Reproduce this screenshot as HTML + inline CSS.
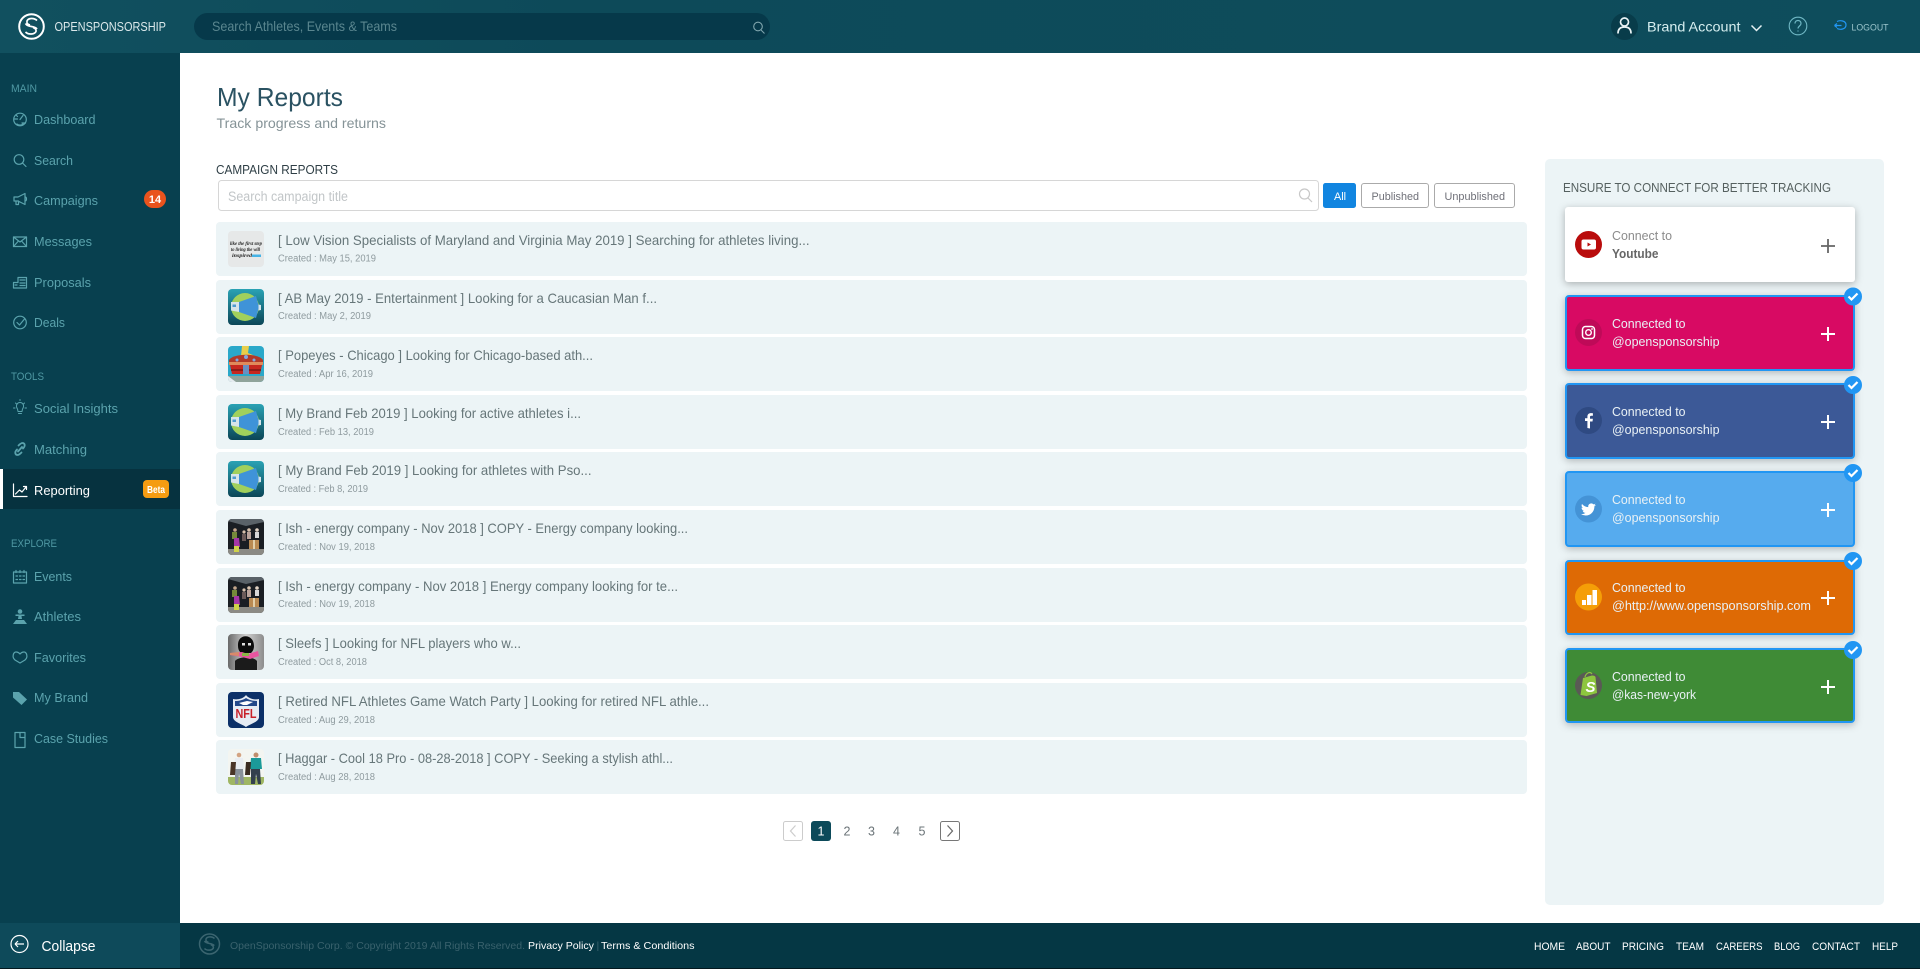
<!DOCTYPE html>
<html lang="en"><head><meta charset="utf-8"><title>My Reports</title>
<style>
html,body{margin:0;padding:0;background:#fff;width:1920px;height:969px;overflow:hidden}
svg{display:block;font-family:"Liberation Sans",sans-serif}
.s{fill:none;stroke:#5ba3ad;stroke-width:1.2;stroke-linecap:round;stroke-linejoin:round}
.n{fill:#5ba3ad;font-size:13px}
.l{fill:#4f98a3;font-size:11px}
.t{fill:#667679;font-size:14px}
.d{fill:#8f9b9f;font-size:10px}
.w{fill:#e9f1f5;font-size:12.5px}
.f{fill:#fff;font-size:11px}
.pg{fill:#6b7478;font-size:12.5px;text-anchor:middle}
.pl{stroke:#fff;stroke-width:2;fill:none}
</style></head><body>
<svg width="1920" height="969" viewBox="0 0 1920 969" xmlns="http://www.w3.org/2000/svg">
<defs>
<linearGradient id="hd" x1="0" x2="1" y1="0" y2="0"><stop offset="0" stop-color="#11505f"/><stop offset=".3" stop-color="#0d4a59"/><stop offset="1" stop-color="#0e4d5c"/></linearGradient>
<linearGradient id="fish" x1="0" x2="0" y1="0" y2="1"><stop offset="0" stop-color="#2aa2b4"/><stop offset="1" stop-color="#0c4657"/></linearGradient>
<linearGradient id="gr" x1="0" x2="1" y1="0" y2="0"><stop offset="0" stop-color="#6a6a6a"/><stop offset=".5" stop-color="#cfcfcf"/><stop offset="1" stop-color="#8d8d8d"/></linearGradient>
<clipPath id="rc"><rect width="36" height="36" rx="4"/></clipPath>
<symbol id="thFish" width="36" height="36" overflow="visible"><g clip-path="url(#rc)"><rect width="36" height="36" fill="url(#fish)"/><circle cx="17" cy="18" r="14" fill="#a1d05c"/><path d="M11 13 28 7 31 18 28 29 11 23z" fill="#3f93d8"/><path d="M3 13 11 13V23L3 21.500z" fill="#d6e4ea"/><rect x="4.500" y="15.500" width="3.500" height="2.500" fill="#4f9bd0"/><path d="M30.500 15.500 33 16v5l-2.500.5z" fill="#d6e4ea"/></g></symbol>
<symbol id="thIsh" width="36" height="36" overflow="visible"><g clip-path="url(#rc)"><rect width="36" height="36" fill="#1a1e23"/><path d="M0 0H36V3L18 7 0 2z" fill="#5a6268"/><rect y="30" width="36" height="6" fill="#8b8a84"/><circle cx="7" cy="11" r="1.800" fill="#c5a78c"/><rect x="4" y="13" width="5" height="7" fill="#758a3a"/><path d="M6 19h5l1 9H6z" fill="#a536a8"/><rect x="6" y="27" width="5" height="6" fill="#cfd24a"/><circle cx="16" cy="13" r="1.600" fill="#d8c2ad"/><rect x="14" y="15" width="4" height="7" fill="#6a5a58"/><circle cx="21" cy="11" r="1.800" fill="#d8c2ad"/><rect x="19" y="13" width="4" height="7" fill="#b9a39a"/><circle cx="29" cy="11" r="1.800" fill="#e2d3c4"/><rect x="27" y="13" width="4" height="6" fill="#d8d8d8"/><rect x="21" y="21" width="10" height="9" fill="#b98a52"/><rect x="25" y="21" width="2" height="9" fill="#e2cfa9"/></g></symbol>
</defs>

<!-- backgrounds -->
<rect width="1920" height="969" fill="#fff"/>
<rect width="180" height="923" fill="#08404f"/>
<rect width="1920" height="53" fill="url(#hd)"/>
<rect y="923" width="1920" height="45" fill="#053744"/>
<rect y="923" width="180" height="45" fill="#0e4a5a"/>
<rect y="968" width="1920" height="1" fill="#02181f"/>

<!-- header -->
<g fill="none" stroke="#fff">
<circle cx="31.500" cy="26.500" r="12.300" stroke-width="2"/>
<path d="M37 20.500c-3-3-9-2.500-10 .5-.5 2 1 3.500 3 4M25.500 23.500c2 4 9 2 11.500 5.500M25.500 32c3 3 9 2.500 10.500-.5.5-2-1-3.500-3-4" stroke-width="1.700"/>
</g>
<text x="54.500" y="31" fill="#dbe8eb" font-size="13" textLength="111.500" lengthAdjust="spacingAndGlyphs">OPENSPONSORSHIP</text>
<rect x="194" y="13" width="576" height="27" rx="13.500" fill="#06394a"/>
<text x="212" y="31" fill="#5a868f" font-size="14" textLength="185" lengthAdjust="spacingAndGlyphs">Search Athletes, Events &amp; Teams</text>
<circle cx="758" cy="26.500" r="4.300" fill="none" stroke="#7fa5ad" stroke-width="1.100"/><path d="M761 30l3.500 3.500" stroke="#7fa5ad" stroke-width="1.100"/>

<circle cx="1624.500" cy="26.500" r="13.500" fill="#083c4a"/>
<circle cx="1624.500" cy="22" r="4" fill="none" stroke="#e9f3f5" stroke-width="1.700"/>
<path d="M1618 33.500c0-4.500 2.500-6.500 6.500-6.500s6.500 2 6.500 6.500" fill="none" stroke="#e9f3f5" stroke-width="1.700"/>
<text x="1647" y="31.500" fill="#d6eef0" font-size="14" textLength="93.500" lengthAdjust="spacingAndGlyphs">Brand Account</text>
<path d="M1751.500 25.500l5 5 5-5" fill="none" stroke="#e6f1f3" stroke-width="1.500"/>
<circle cx="1798" cy="26" r="8.800" fill="none" stroke="#6fb7c4" stroke-width="1.100"/>
<path d="M1795 23.500c0-4 6-4 6 0 0 2.500-3 2.500-3 5M1798 30.500v1" fill="none" stroke="#6fb7c4" stroke-width="1.200"/>
<path d="M1837 21.500c3-1.500 9-1 9 3.500s-6 5-9 3.500M1834.500 25.500h7M1834.500 25.500l2.500-2M1834.500 25.500l2.500 2" fill="none" stroke="#2196f3" stroke-width="1.200"/>
<text x="1851.500" y="30.500" fill="#9cc6cd" font-size="9.500" textLength="37" lengthAdjust="spacingAndGlyphs">LOGOUT</text>

<!-- sidebar -->
<rect y="469" width="180" height="40" fill="#06323f"/><rect y="469" width="3" height="40" fill="#fff"/>
<text class="l" x="11" y="92" textLength="26" lengthAdjust="spacingAndGlyphs">MAIN</text>
<text class="n" x="34" y="124" textLength="61.500" lengthAdjust="spacingAndGlyphs">Dashboard</text>
<text class="n" x="34" y="165" textLength="39" lengthAdjust="spacingAndGlyphs">Search</text>
<text class="n" x="34" y="205" textLength="64" lengthAdjust="spacingAndGlyphs">Campaigns</text>
<text class="n" x="34" y="246" textLength="58" lengthAdjust="spacingAndGlyphs">Messages</text>
<text class="n" x="34" y="287" textLength="57" lengthAdjust="spacingAndGlyphs">Proposals</text>
<text class="n" x="34" y="327" textLength="31" lengthAdjust="spacingAndGlyphs">Deals</text>
<text class="l" x="11" y="380" textLength="33" lengthAdjust="spacingAndGlyphs">TOOLS</text>
<text class="n" x="34" y="413" textLength="84" lengthAdjust="spacingAndGlyphs">Social Insights</text>
<text class="n" x="34" y="454" textLength="53" lengthAdjust="spacingAndGlyphs">Matching</text>
<text x="34" y="495" fill="#fff" font-size="13" textLength="56" lengthAdjust="spacingAndGlyphs">Reporting</text>
<text class="l" x="11" y="547" textLength="46" lengthAdjust="spacingAndGlyphs">EXPLORE</text>
<text class="n" x="34" y="581" textLength="38" lengthAdjust="spacingAndGlyphs">Events</text>
<text class="n" x="34" y="621" textLength="47" lengthAdjust="spacingAndGlyphs">Athletes</text>
<text class="n" x="34" y="662" textLength="52" lengthAdjust="spacingAndGlyphs">Favorites</text>
<text class="n" x="34" y="702" textLength="54" lengthAdjust="spacingAndGlyphs">My Brand</text>
<text class="n" x="34" y="743" textLength="74" lengthAdjust="spacingAndGlyphs">Case Studies</text>

<rect x="144" y="190" width="22" height="18" rx="9" fill="#e9531d"/>
<text x="155" y="203" fill="#fff" font-size="11" font-weight="bold" text-anchor="middle">14</text>
<rect x="143" y="480" width="26" height="18" rx="4" fill="#f59c12"/>
<text x="156" y="493" fill="#fff" font-size="10" font-weight="bold" text-anchor="middle" textLength="18" lengthAdjust="spacingAndGlyphs">Beta</text>

<!-- sidebar icons -->
<g class="s">
<circle cx="20" cy="119.500" r="6.300"/><path d="M20 119.500l3-4M14.500 119h3M22 123h3.500M17 124c1 1.500 5 1.500 6 0M16 115l1.500 1.500"/>
<circle cx="19" cy="159.500" r="4.800"/><path d="M22.500 163l3.500 3.500"/>
<path d="M14 197h4l7-3.500v11L18 201h-4zM16 201v3.500h2.500V201M25 197c2 0 2 4 0 4"/>
<rect x="13.500" y="237" width="13" height="9.500"/><path d="M13.500 237l6.500 5 6.500-5M13.500 246.500l4.500-5M26.500 246.500l-4.500-5"/>
<path d="M18 277.500h8.500V288H13.500v-5.500H18zM20 280h5M20 283h5M20 285.500h5M15 285h2"/>
<circle cx="20" cy="322.500" r="6.300"/><path d="M17 322.500l2.500 2.500 5-6"/>
<path d="M17.500 409c-2.500-3.500 0-6.500 2.500-6.500s5 3 2.500 6.500l-.5 2.500h-4zM18.500 413.500h3M13.500 408h1.500M25 408h1.500M15.500 403l1 1M24.500 403l-1 1M20 400.500v-1" stroke-width="1"/>
<path d="M17 449.500c-3 3-1.500 5.500.5 5.500 1.500 0 2.500-1 4-2.500M23 448.500c3-3 1.500-5.500-.5-5.500-1.500 0-2.500 1-4 2.500M18 451.500l4-4.500" stroke-width="1.800"/>
<path d="M13.500 484v12.500h13.500" stroke="#fff"/><path d="M15.500 494l4-4 2.500 2 4-5M23.500 486.500h3v3" stroke="#fff"/>
<rect x="13.500" y="572" width="13" height="11"/><path d="M16 570.500v2M20 570.500v2M24 570.500v2M16 576h1.500M19.500 576h1.500M23 576h1.500M16 579.500h1.500M19.500 579.500h1.500M23 579.500h1.500"/>
<path d="M15 660c-3.500-3-1.500-8 1-8 1.500 0 3 .8 4 2 1-1.200 2.500-2 4-2 2.500 0 4.500 5 1 8l-5 3z"/>
<path d="M15 732.500h10v15H15zM20 732.500v5h5"/>
</g>
<g fill="#5ba3ad">
<circle cx="20" cy="611.500" r="2.300"/><path d="M15.500 614.500h9v1.500h-3l.5 3h-4l.5-3h-3z"/><path d="M13 624l3-4h8l3 4z"/>
<path d="M13 692h6l8 7.500-5.500 5.500-8.500-7.500z"/>
</g>

<!-- page heading -->
<text x="217" y="106" fill="#2a5262" font-size="26" textLength="126" lengthAdjust="spacingAndGlyphs">My Reports</text>
<text x="216.500" y="128" fill="#859397" font-size="14" textLength="169.500" lengthAdjust="spacingAndGlyphs">Track progress and returns</text>
<text x="216" y="174" fill="#2f3f46" font-size="12.500" textLength="122" lengthAdjust="spacingAndGlyphs">CAMPAIGN REPORTS</text>

<rect x="218.500" y="180.500" width="1100" height="30" rx="3" fill="#fff" stroke="#d6d6d6"/>
<text x="228" y="201" fill="#c2c6c8" font-size="13.500" textLength="120" lengthAdjust="spacingAndGlyphs">Search campaign title</text>
<circle cx="1304.500" cy="194" r="5" fill="none" stroke="#c8c8c8" stroke-width="1.200"/><path d="M1308 198l4 4" stroke="#c8c8c8" stroke-width="1.200"/>
<rect x="1323" y="183" width="33" height="25" rx="2.500" fill="#1185e0"/>
<text x="1334" y="200" fill="#fff" font-size="11" textLength="12" lengthAdjust="spacingAndGlyphs">All</text>
<rect x="1361.500" y="183.500" width="67" height="24" rx="2.500" fill="#fff" stroke="#aaa"/>
<text x="1371.500" y="200" fill="#6f7078" font-size="11" textLength="47.500" lengthAdjust="spacingAndGlyphs">Published</text>
<rect x="1434.500" y="183.500" width="80" height="24" rx="2.500" fill="#fff" stroke="#aaa"/>
<text x="1444.500" y="200" fill="#6f7078" font-size="11" textLength="60.500" lengthAdjust="spacingAndGlyphs">Unpublished</text>

<!-- rows -->
<g fill="#ecf4f6">
<rect x="216" y="222" width="1311" height="54" rx="4"/><rect x="216" y="280" width="1311" height="54" rx="4"/><rect x="216" y="337" width="1311" height="54" rx="4"/><rect x="216" y="395" width="1311" height="54" rx="4"/><rect x="216" y="452" width="1311" height="54" rx="4"/><rect x="216" y="510" width="1311" height="54" rx="4"/><rect x="216" y="568" width="1311" height="54" rx="4"/><rect x="216" y="625" width="1311" height="54" rx="4"/><rect x="216" y="683" width="1311" height="54" rx="4"/><rect x="216" y="740" width="1311" height="54" rx="4"/>
</g>
<text class="t" x="278" y="245" textLength="531.500" lengthAdjust="spacingAndGlyphs">[ Low Vision Specialists of Maryland and Virginia May 2019 ] Searching for athletes living...</text>
<text class="d" x="278" y="261.500" textLength="98" lengthAdjust="spacingAndGlyphs">Created : May 15, 2019</text>
<text class="t" x="278" y="303" textLength="379" lengthAdjust="spacingAndGlyphs">[ AB May 2019 - Entertainment ] Looking for a Caucasian Man f...</text>
<text class="d" x="278" y="319" textLength="93" lengthAdjust="spacingAndGlyphs">Created : May 2, 2019</text>
<text class="t" x="278" y="360" textLength="315" lengthAdjust="spacingAndGlyphs">[ Popeyes - Chicago ] Looking for Chicago-based ath...</text>
<text class="d" x="278" y="377" textLength="95" lengthAdjust="spacingAndGlyphs">Created : Apr 16, 2019</text>
<text class="t" x="278" y="418" textLength="303" lengthAdjust="spacingAndGlyphs">[ My Brand Feb 2019 ] Looking for active athletes i...</text>
<text class="d" x="278" y="435" textLength="96" lengthAdjust="spacingAndGlyphs">Created : Feb 13, 2019</text>
<text class="t" x="278" y="475" textLength="313.500" lengthAdjust="spacingAndGlyphs">[ My Brand Feb 2019 ] Looking for athletes with Pso...</text>
<text class="d" x="278" y="492" textLength="90" lengthAdjust="spacingAndGlyphs">Created : Feb 8, 2019</text>
<text class="t" x="278" y="533" textLength="410" lengthAdjust="spacingAndGlyphs">[ Ish - energy company - Nov 2018 ] COPY - Energy company looking...</text>
<text class="d" x="278" y="550" textLength="97" lengthAdjust="spacingAndGlyphs">Created : Nov 19, 2018</text>
<text class="t" x="278" y="591" textLength="400" lengthAdjust="spacingAndGlyphs">[ Ish - energy company - Nov 2018 ] Energy company looking for te...</text>
<text class="d" x="278" y="607" textLength="97" lengthAdjust="spacingAndGlyphs">Created : Nov 19, 2018</text>
<text class="t" x="278" y="648" textLength="243" lengthAdjust="spacingAndGlyphs">[ Sleefs ] Looking for NFL players who w...</text>
<text class="d" x="278" y="665" textLength="89" lengthAdjust="spacingAndGlyphs">Created : Oct 8, 2018</text>
<text class="t" x="278" y="706" textLength="431" lengthAdjust="spacingAndGlyphs">[ Retired NFL Athletes Game Watch Party ] Looking for retired NFL athle...</text>
<text class="d" x="278" y="723" textLength="97" lengthAdjust="spacingAndGlyphs">Created : Aug 29, 2018</text>
<text class="t" x="278" y="763" textLength="395" lengthAdjust="spacingAndGlyphs">[ Haggar - Cool 18 Pro - 08-28-2018 ] COPY - Seeking a stylish athl...</text>
<text class="d" x="278" y="780" textLength="97" lengthAdjust="spacingAndGlyphs">Created : Aug 28, 2018</text>

<!-- thumbnails -->
<g transform="translate(228,231)"><g clip-path="url(#rc)"><rect width="36" height="36" fill="#e6e8e8"/><g font-family="Liberation Serif,serif" font-style="italic" font-weight="bold" font-size="5.500" fill="#222"><text x="2" y="14" textLength="32" lengthAdjust="spacingAndGlyphs">like the first step</text><text x="3" y="20" textLength="29" lengthAdjust="spacingAndGlyphs">to living the will</text><text x="4" y="26" textLength="20" lengthAdjust="spacingAndGlyphs">inspired</text></g><rect x="24" y="23.500" width="9" height="2.500" fill="#45b3e6"/></g></g>
<use href="#thFish" x="228" y="289"/>
<g transform="translate(228,346)"><g clip-path="url(#rc)"><rect width="36" height="36" fill="#2aa8c9"/><path d="M14 0h7l-1 7 7 3H13z" fill="#e8cf4a"/><path d="M1 14C5 7 31 7 35 14v5H1z" fill="#b13a28"/><rect x="1" y="16" width="34" height="3" fill="#e08a5a"/><path d="M2 19h32l-2 9H4z" fill="#c6281f"/><rect x="3" y="23" width="30" height="2" fill="#8e1c18"/><circle cx="18" cy="11" r="2" fill="#7fa6e0"/><circle cx="9" cy="14" r="1.500" fill="#7fa6e0"/><circle cx="26" cy="14" r="1.500" fill="#7fa6e0"/><path d="M15 19h6v9h-6z" fill="#6a8fc0"/><rect y="30" width="36" height="6" fill="#8fa39a"/><path d="M0 30l8 6H0z" fill="#e6ecf0"/></g></g>
<use href="#thFish" x="228" y="404"/>
<use href="#thFish" x="228" y="461"/>
<use href="#thIsh" x="228" y="519"/>
<use href="#thIsh" x="228" y="577"/>
<g transform="translate(228,634)"><g clip-path="url(#rc)"><rect width="36" height="36" fill="url(#gr)"/><path d="M10 12C9-1 26-1 26 12c0 4-2 6-3 7H13c-1-1-3-3-3-7z" fill="#0b0b0b"/><path d="M7 27c4-5 18-5 22 0v9H7z" fill="#1b1b1b"/><rect x="14" y="9" width="3" height="2.500" fill="#ddd"/><rect x="20" y="9" width="3" height="2.500" fill="#ddd"/><path d="M2 19l12-1 6 2 10-3 1 5-9 3-8-2-12-2z" fill="#e8559f"/><path d="M2 19l9-1v4l-9-1z" fill="#d98a6a"/><rect x="14" y="19" width="7" height="3" fill="#8ab545"/></g></g>
<g transform="translate(228,692)"><g clip-path="url(#rc)"><rect width="36" height="36" fill="#0c3068"/><path d="M5 7c4 1 10 0 13-4 3 4 9 5 13 4v18c0 5-9 7-13 10-4-3-13-5-13-10z" fill="#e6ecf4"/><path d="M7 9c4 0 8-1 11-3 3 2 7 3 11 3v5H7z" fill="#23488a"/><path d="M11 11l8-2 6 1-6 3h-4z" fill="#fff"/><text x="18" y="26" fill="#c8202a" font-size="13" font-weight="bold" text-anchor="middle" textLength="21" lengthAdjust="spacingAndGlyphs">NFL</text></g></g>
<g transform="translate(228,749)"><g clip-path="url(#rc)"><rect width="36" height="36" fill="#f3f5f1"/><rect y="28" width="36" height="8" fill="#9fb663"/><circle cx="11" cy="6" r="2.300" fill="#d3a382"/><path d="M7 9h8l1 11H6z" fill="#e9edf2"/><path d="M7 20h8l1 15h-3l-2-10-1 10H7z" fill="#89919a"/><path d="M3 13h5l-1 13H2z" fill="#4a3527"/><circle cx="28" cy="6" r="2.500" fill="#c08e6d"/><path d="M23 9h10l1 11H22z" fill="#1b9a99"/><path d="M23 20h9l1 15h-3l-2-10-1 10h-4z" fill="#33404d"/><path d="M18 13h5l-1 13h-5z" fill="#3a2b21"/></g></g>

<!-- pagination -->
<rect x="783.500" y="821.500" width="19" height="19" rx="2" fill="#fff" stroke="#ccc"/>
<path d="M795.500 825.500l-5 5.500 5 5.500" fill="none" stroke="#ccc" stroke-width="1.200"/>
<rect x="811" y="821" width="20" height="20" rx="3" fill="#0c4a5a"/>
<text x="821" y="835.500" fill="#fff" font-size="12.500" text-anchor="middle">1</text>
<text class="pg" x="847" y="835.500">2</text><text class="pg" x="871.500" y="835.500">3</text><text class="pg" x="896.500" y="835.500">4</text><text class="pg" x="922" y="835.500">5</text>
<rect x="940.500" y="821.500" width="19" height="19" rx="2" fill="#fff" stroke="#777"/>
<path d="M947.500 825.500l5 5.500-5 5.500" fill="none" stroke="#666" stroke-width="1.200"/>

<!-- right panel -->
<rect x="1545" y="159" width="339" height="746" rx="5" fill="#ecf4f6"/>
<text x="1563" y="192" fill="#55605f" font-size="12.500" textLength="268" lengthAdjust="spacingAndGlyphs">ENSURE TO CONNECT FOR BETTER TRACKING</text>

<rect x="1565" y="207" width="290" height="75" rx="3" fill="#fff" style="filter:drop-shadow(0 2px 4px rgba(0,0,0,.28))"/>
<circle cx="1588.500" cy="244.500" r="13.500" fill="#b90c0c"/>
<rect x="1581.500" y="239.500" width="14.500" height="10" rx="2" fill="#fff"/><path d="M1587.500 242.500v4l3.500-2z" fill="#b90c0c"/>
<text x="1612" y="240" fill="#8c8c8c" font-size="12.500" textLength="60" lengthAdjust="spacingAndGlyphs">Connect to</text>
<text x="1612" y="258" fill="#666" font-size="12.500" font-weight="bold" textLength="46.500" lengthAdjust="spacingAndGlyphs">Youtube</text>
<path d="M1821 246h14M1828 239v14" stroke="#666" stroke-width="1.800"/>

<g style="filter:drop-shadow(0 2px 4px rgba(0,0,0,.25))">
<rect x="1566" y="296" width="288" height="74" rx="3" fill="#d80a63" stroke="#2196f3" stroke-width="2"/>
<rect x="1566" y="384" width="288" height="74" rx="3" fill="#3c5997" stroke="#2196f3" stroke-width="2"/>
<rect x="1566" y="472" width="288" height="74" rx="3" fill="#56abee" stroke="#2196f3" stroke-width="2"/>
<rect x="1566" y="561" width="288" height="73" rx="3" fill="#de6a05" stroke="#2196f3" stroke-width="2"/>
<rect x="1566" y="649" width="288" height="73" rx="3" fill="#3f8b36" stroke="#2196f3" stroke-width="2"/>
</g>

<circle cx="1588.500" cy="332.500" r="13.500" fill="#bf0a58"/>
<rect x="1582.500" y="326.500" width="12" height="12" rx="3" fill="none" stroke="#fff" stroke-width="1.500"/><circle cx="1588.500" cy="332.500" r="2.800" fill="none" stroke="#fff" stroke-width="1.400"/><circle cx="1592" cy="329" r=".9" fill="#fff"/>
<circle cx="1588.500" cy="420.500" r="13.500" fill="#2f4a82"/>
<path d="M1590 428.500v-7h2.500l.4-2.800H1590V417c0-.8.3-1.300 1.400-1.300h1.500v-2.500c-.3 0-1.100-.1-2-.1-2 0-3.500 1.300-3.500 3.500v1.600h-2.400v2.800h2.400v7z" fill="#fff"/>
<circle cx="1588.500" cy="509" r="13.500" fill="#4493d6"/>
<path transform="translate(1581,502) scale(.62)" d="M23.953 4.570a10 10 0 01-2.825.775 4.958 4.958 0 002.163-2.723c-.951.555-2.005.959-3.127 1.184a4.920 4.920 0 00-8.384 4.482C7.690 8.095 4.067 6.130 1.640 3.162a4.822 4.822 0 00-.666 2.475c0 1.710.870 3.213 2.188 4.096a4.904 4.904 0 01-2.228-.616v.06a4.923 4.923 0 003.946 4.827 4.996 4.996 0 01-2.212.085 4.936 4.936 0 004.604 3.417 9.867 9.867 0 01-6.102 2.105c-.39 0-.779-.023-1.170-.067a13.995 13.995 0 007.557 2.209c9.053 0 13.998-7.496 13.998-13.985 0-.21 0-.42-.015-.63A9.935 9.935 0 0024 4.590z" fill="#fff"/>
<circle cx="1588.500" cy="597" r="13.500" fill="#f59e07"/>
<path d="M1582 600h4v5h-4zM1587 595h4.500v10H1587zM1592.500 590h4.500v15h-4.500z" fill="#fff"/>
<circle cx="1588.500" cy="685.500" r="13.500" fill="#5a5a55"/>
<path d="M1583 678l9-2.500c2 0 3 .5 3.500 1.500l1.500 16-10.500 3-6-1z" fill="#8dc63f"/>
<path d="M1585 677c1-4 5-6 7-3" fill="none" stroke="#8dc63f" stroke-width="1.200"/>
<text x="1585.500" y="692" fill="#fff" font-size="15" font-weight="bold" font-style="italic">S</text>

<g class="w">
<text x="1612" y="328" textLength="73.500" lengthAdjust="spacingAndGlyphs">Connected to</text><text x="1612" y="346" textLength="107.500" lengthAdjust="spacingAndGlyphs">@opensponsorship</text>
<text x="1612" y="416" textLength="73.500" lengthAdjust="spacingAndGlyphs">Connected to</text><text x="1612" y="434" textLength="107.500" lengthAdjust="spacingAndGlyphs">@opensponsorship</text>
<text x="1612" y="504" textLength="73.500" lengthAdjust="spacingAndGlyphs">Connected to</text><text x="1612" y="522" textLength="107.500" lengthAdjust="spacingAndGlyphs">@opensponsorship</text>
<text x="1612" y="592" textLength="73.500" lengthAdjust="spacingAndGlyphs">Connected to</text><text x="1612" y="610" textLength="199" lengthAdjust="spacingAndGlyphs">@http://www.opensponsorship.com</text>
<text x="1612" y="681" textLength="73.500" lengthAdjust="spacingAndGlyphs">Connected to</text><text x="1612" y="699" textLength="84" lengthAdjust="spacingAndGlyphs">@kas-new-york</text>
</g>
<path class="pl" d="M1821 334h14M1828 327v14M1821 422h14M1828 415v14M1821 510h14M1828 503v14M1821 598h14M1828 591v14M1821 687h14M1828 680v14"/>
<g fill="#2196f3"><circle cx="1853" cy="296.500" r="9"/><circle cx="1853" cy="385" r="9"/><circle cx="1853" cy="473" r="9"/><circle cx="1853" cy="561" r="9"/><circle cx="1853" cy="650" r="9"/></g>
<path d="M1848.500 296.500l3 3 6-6M1848.500 385l3 3 6-6M1848.500 473l3 3 6-6M1848.500 561l3 3 6-6M1848.500 650l3 3 6-6" fill="none" stroke="#fff" stroke-width="2.200"/>

<!-- footer -->
<circle cx="19.500" cy="944" r="8.500" fill="none" stroke="#fff" stroke-width="1.200"/>
<path d="M24 944h-9M15 944l3-3M15 944l3 3" fill="none" stroke="#fff" stroke-width="1.200"/>
<text x="41.500" y="951" fill="#fff" font-size="14.500" textLength="54" lengthAdjust="spacingAndGlyphs">Collapse</text>
<circle cx="209.500" cy="944" r="10" fill="none" stroke="#3b6570" stroke-width="1.500"/>
<path d="M214.500 938.500c-2.500-2.500-7.500-2-8.500.5-.4 1.700.8 3 2.500 3.300M204.500 941c1.700 3.300 7.500 1.700 9.800 4.600M204.500 948.500c2.500 2.500 7.500 2 8.800-.4.400-1.700-.8-2.900-2.500-3.300" fill="none" stroke="#3b6570" stroke-width="1.500"/>
<text x="230" y="949" fill="#3a626d" font-size="10.500" textLength="295" lengthAdjust="spacingAndGlyphs">OpenSponsorship Corp. © Copyright 2019 All Rights Reserved.</text>
<text x="528" y="949" fill="#fff" font-size="10.500" textLength="66" lengthAdjust="spacingAndGlyphs">Privacy Policy</text>
<text x="596.500" y="949" fill="#3a626d" font-size="10.500">|</text>
<text x="601" y="949" fill="#fff" font-size="10.500" textLength="93.500" lengthAdjust="spacingAndGlyphs">Terms &amp; Conditions</text>
<g>
<text class="f" x="1534" y="950" textLength="31" lengthAdjust="spacingAndGlyphs">HOME</text>
<text class="f" x="1576" y="950" textLength="34.500" lengthAdjust="spacingAndGlyphs">ABOUT</text>
<text class="f" x="1622" y="950" textLength="42" lengthAdjust="spacingAndGlyphs">PRICING</text>
<text class="f" x="1676" y="950" textLength="28" lengthAdjust="spacingAndGlyphs">TEAM</text>
<text class="f" x="1716" y="950" textLength="46.500" lengthAdjust="spacingAndGlyphs">CAREERS</text>
<text class="f" x="1774" y="950" textLength="26" lengthAdjust="spacingAndGlyphs">BLOG</text>
<text class="f" x="1812" y="950" textLength="48" lengthAdjust="spacingAndGlyphs">CONTACT</text>
<text class="f" x="1872" y="950" textLength="26" lengthAdjust="spacingAndGlyphs">HELP</text>
</g>
</svg>
</body></html>
